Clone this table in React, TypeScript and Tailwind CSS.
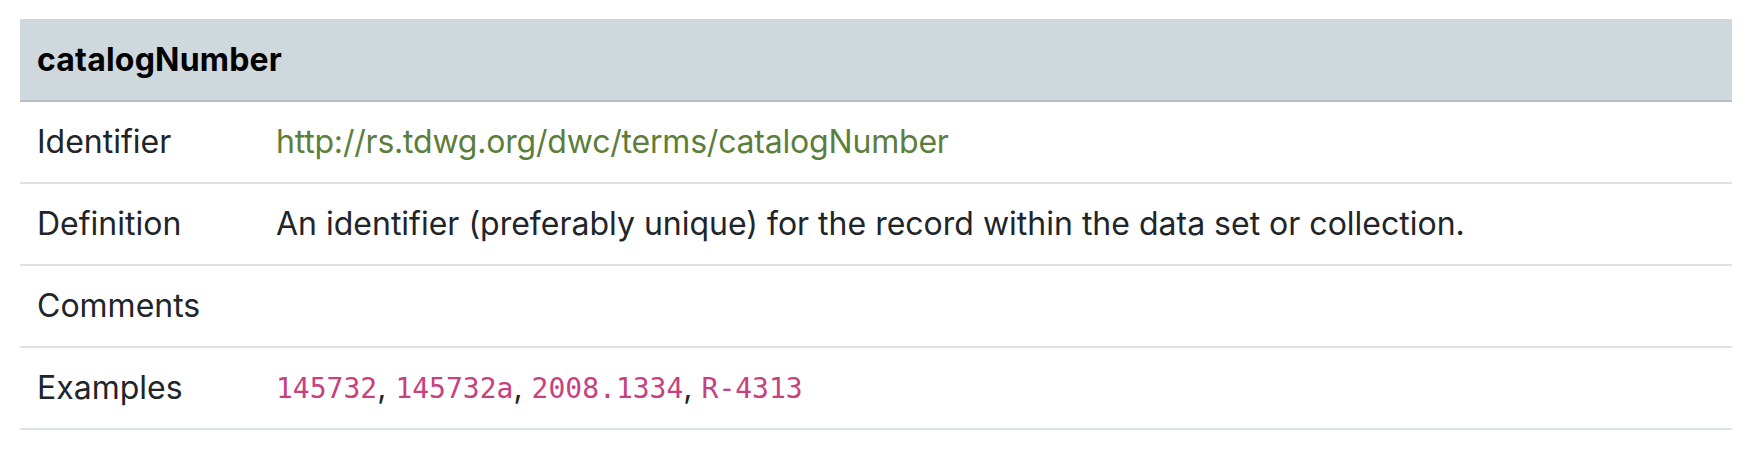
import React from "react";

const code = "font-['DejaVu_Sans_Mono',monospace] text-[28px] text-[#c7417e]";

const rows: { label: string; value: React.ReactNode }[] = [
  {
    label: "Identifier",
    value: (
      <a className="text-[#5d7e3a] no-underline tracking-[-0.2px]">http://rs.tdwg.org/dwc/terms/catalogNumber</a>
    ),
  },
  {
    label: "Definition",
    value: "An identifier (preferably unique) for the record within the data set or collection.",
  },
  { label: "Comments", value: "" },
  {
    label: "Examples",
    value: (
      <>
        <code className={code}>145732</code>,{" "}
        <code className={code}>145732a</code>,{" "}
        <code className={code}>2008.1334</code>,{" "}
        <code className={code}>R-4313</code>
      </>
    ),
  },
];

export default function App() {
  return (
    <div className="min-h-[464px] bg-white pt-[19px] pl-[20px] pr-[18px] font-['Inter','Noto_Sans',sans-serif] text-[#212529]">
      <table className="w-full border-collapse text-[32px] leading-[44px]">
        <thead>
          <tr className="bg-[#cfd8dc] border-b-2 border-[#b5bec4]">
            <th colSpan={2} className="h-[82px] px-[17px] text-left font-bold text-black tracking-[0.2px]">
              catalogNumber
            </th>
          </tr>
        </thead>
        <tbody>
          {rows.map((r) => (
            <tr key={r.label} className="border-b-2 border-[#dee2e6]">
              <td className="h-[82px] w-[239px] px-[17px] align-middle">{r.label}</td>
              <td className="h-[82px] px-[17px] align-middle">{r.value}</td>
            </tr>
          ))}
        </tbody>
      </table>
    </div>
  );
}
